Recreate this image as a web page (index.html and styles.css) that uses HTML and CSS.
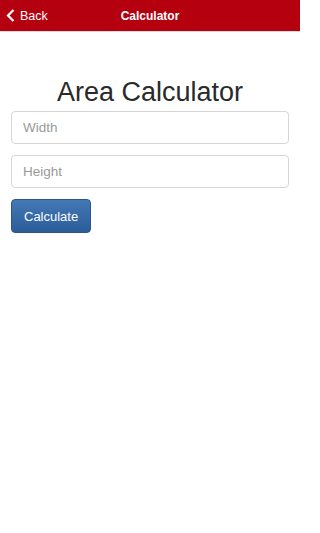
FILE: index.html
```html
<!DOCTYPE html>
<html>
<head>
<meta charset="utf-8">
<meta name="viewport" content="width=300">
<link rel="stylesheet" href="styles.css">
</head>
<body>
<div class="app">
  <header class="topbar">
    <a class="back">
      <svg class="chev" width="9" height="13" viewBox="0 0 9 13"><path d="M7.5 1 L2 6.5 L7.5 12" fill="none" stroke="#fff" stroke-width="2.2"/></svg>
      <span>Back</span>
    </a>
    <div class="title">Calculator</div>
  </header>
  <main class="content">
    <h1 class="heading">Area Calculator</h1>
    <input class="field" type="text" placeholder="Width">
    <input class="field" type="text" placeholder="Height">
    <div class="actions"><button class="btn">Calculate</button></div>
  </main>
</div>
</body>
</html>
```
FILE: styles.css
```css
html, body {
  margin: 0;
  padding: 0;
  background: #fff;
  font-family: "Liberation Sans", Arial, sans-serif;
}
.app {
  width: 300px;
}
.topbar {
  position: relative;
  height: 31px;
  background: #b4000f;
  border-bottom: 1px solid #dcdcdc;
  display: flex;
  align-items: center;
  justify-content: center;
}
.back {
  position: absolute;
  left: 6px;
  top: 0;
  height: 31px;
  display: flex;
  align-items: center;
  gap: 5px;
  color: #fff;
  font-size: 12.5px;
}
.chev {
  display: block;
}
.title {
  color: #fff;
  font-size: 12px;
  font-weight: bold;
}
.content {
  padding: 44px 11px 0;
  display: flex;
  flex-direction: column;
}
.heading {
  margin: 0 0 3px;
  font-size: 27px;
  line-height: 32px;
  font-weight: normal;
  color: #2a2a2a;
  text-align: center;
}
.field {
  box-sizing: border-box;
  width: 100%;
  height: 33px;
  margin: 0 0 11px;
  padding: 0 11px;
  border: 1px solid #d6d6d6;
  border-radius: 4px;
  font-family: "Liberation Sans", Arial, sans-serif;
  font-size: 13.5px;
  color: #555;
  outline: none;
}
.field::placeholder {
  color: #9a9a9a;
}
.actions {
  display: flex;
}
.btn {
  box-sizing: border-box;
  height: 34px;
  padding: 0 12px;
  border: 1px solid #2a568a;
  border-radius: 4px;
  background: linear-gradient(#4479b6, #2a5c98);
  color: #fff;
  font-family: "Liberation Sans", Arial, sans-serif;
  font-size: 13px;
}
```
